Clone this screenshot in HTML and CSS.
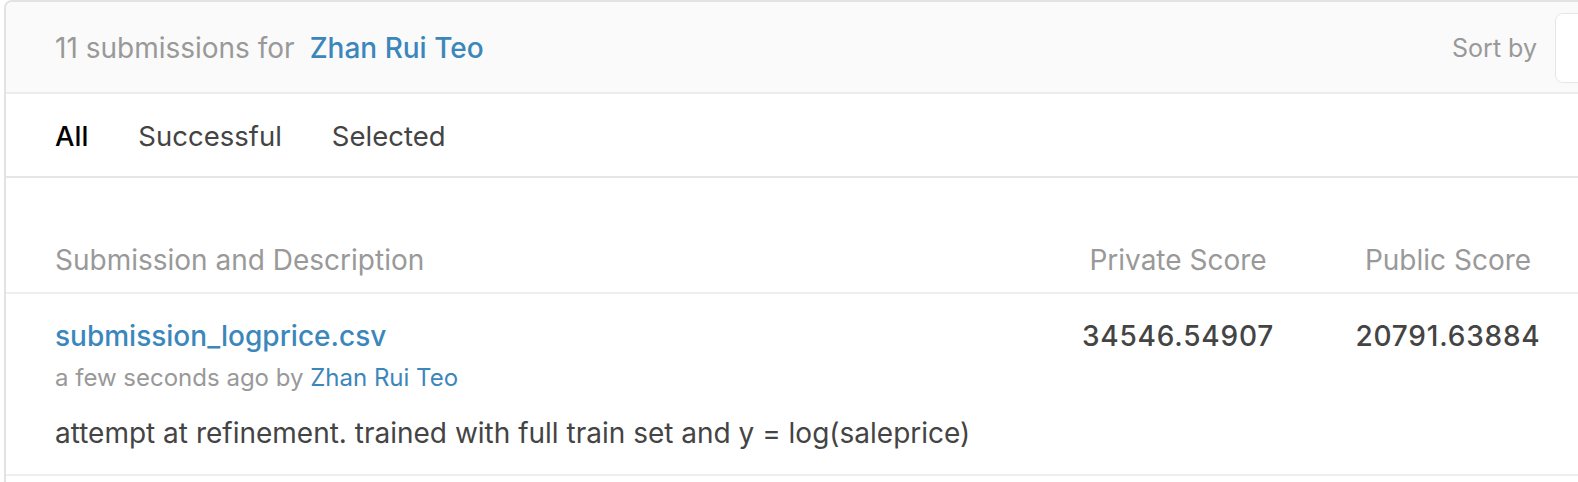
FILE: index.html
```html
<!DOCTYPE html>
<html>
<head>
<meta charset="utf-8">
<link rel="stylesheet" href="styles.css">
</head>
<body>
<div class="card">
  <div class="card-header">
    <div class="title"><span class="count">11 submissions for</span><a class="user">Zhan Rui Teo</a></div>
    <div class="sort">
      <span class="sort-label">Sort by</span>
      <div class="select"></div>
    </div>
  </div>
  <div class="tabs">
    <span class="tab active">All</span>
    <span class="tab">Successful</span>
    <span class="tab">Selected</span>
  </div>
  <div class="table">
    <div class="thead">
      <div class="col-desc">Submission and Description</div>
      <div class="col-score">Private Score</div>
      <div class="col-score">Public Score</div>
    </div>
    <div class="row">
      <div class="col-desc">
        <a class="file">submission_logprice.csv</a>
        <div class="meta">a few seconds ago by <a class="user-small">Zhan Rui Teo</a></div>
        <div class="desc">attempt at refinement. trained with full train set and y = log(saleprice)</div>
      </div>
      <div class="col-score score">34546.54907</div>
      <div class="col-score score">20791.63884</div>
    </div>
  </div>
</div>
</body>
</html>
```

FILE: styles.css
```css
html, body {
  margin: 0;
  padding: 0;
  overflow: hidden;
  background: #fff;
}
body {
  font-family: Inter, "Noto Sans", sans-serif;
  color: #444;
}
.card {
  margin-left: 4px;
  width: 1600px;
  min-height: 540px;
  border: 2px solid #e2e2e2;
  border-radius: 8px;
  box-sizing: border-box;
  overflow: hidden;
}
.card-header {
  height: 92px;
  background: #fafafa;
  border-bottom: 2px solid #ececec;
  display: flex;
  align-items: center;
  justify-content: space-between;
  padding-left: 49px;
  padding-top: 2px;
  box-sizing: border-box;
}
.title {
  font-size: 28px;
  display: flex;
  gap: 15px;
}
.count { color: #999; }
.user { color: #3b87bb; font-weight: 500; }
.sort {
  display: flex;
  align-items: center;
  gap: 18px;
}
.sort-label {
  color: #999;
  font-size: 25px;
}
.select {
  width: 40px;
  height: 70px;
  background: #fff;
  border: 1px solid #e6e6e6;
  border-radius: 8px;
  box-sizing: border-box;
  margin-right: 7px;
}
.tabs {
  height: 84px;
  border-bottom: 2px solid #e6e6e6;
  display: flex;
  align-items: center;
  gap: 50px;
  padding-left: 49px;
  padding-top: 2px;
  box-sizing: border-box;
  font-size: 27.5px;
  color: #444;
}
.tab.active { color: #000; font-weight: 500; }
.thead, .row {
  display: flex;
  padding: 0 19px 0 49px;
  border-bottom: 2px solid #eee;
}
.thead {
  padding-top: 66px;
  padding-bottom: 16px;
  font-size: 28px;
  line-height: 32px;
  color: #999;
}
.col-desc { flex: 1; }
.col-score { width: 270px; text-align: center; }
.row {
  padding-top: 26px;
  padding-bottom: 25px;
}
.file {
  display: block;
  font-size: 28px;
  line-height: 32px;
  font-weight: 500;
  color: #3b87bb;
}
.meta {
  margin-top: 10px;
  font-size: 24px;
  line-height: 32px;
  color: #999;
}
.user-small { color: #3b87bb; }
.desc {
  margin-top: 23px;
  font-size: 28px;
  line-height: 32px;
  color: #444;
}
.score {
  font-size: 28px;
  line-height: 32px;
  font-weight: 500;
  letter-spacing: 0.8px;
  color: #444;
}
```
